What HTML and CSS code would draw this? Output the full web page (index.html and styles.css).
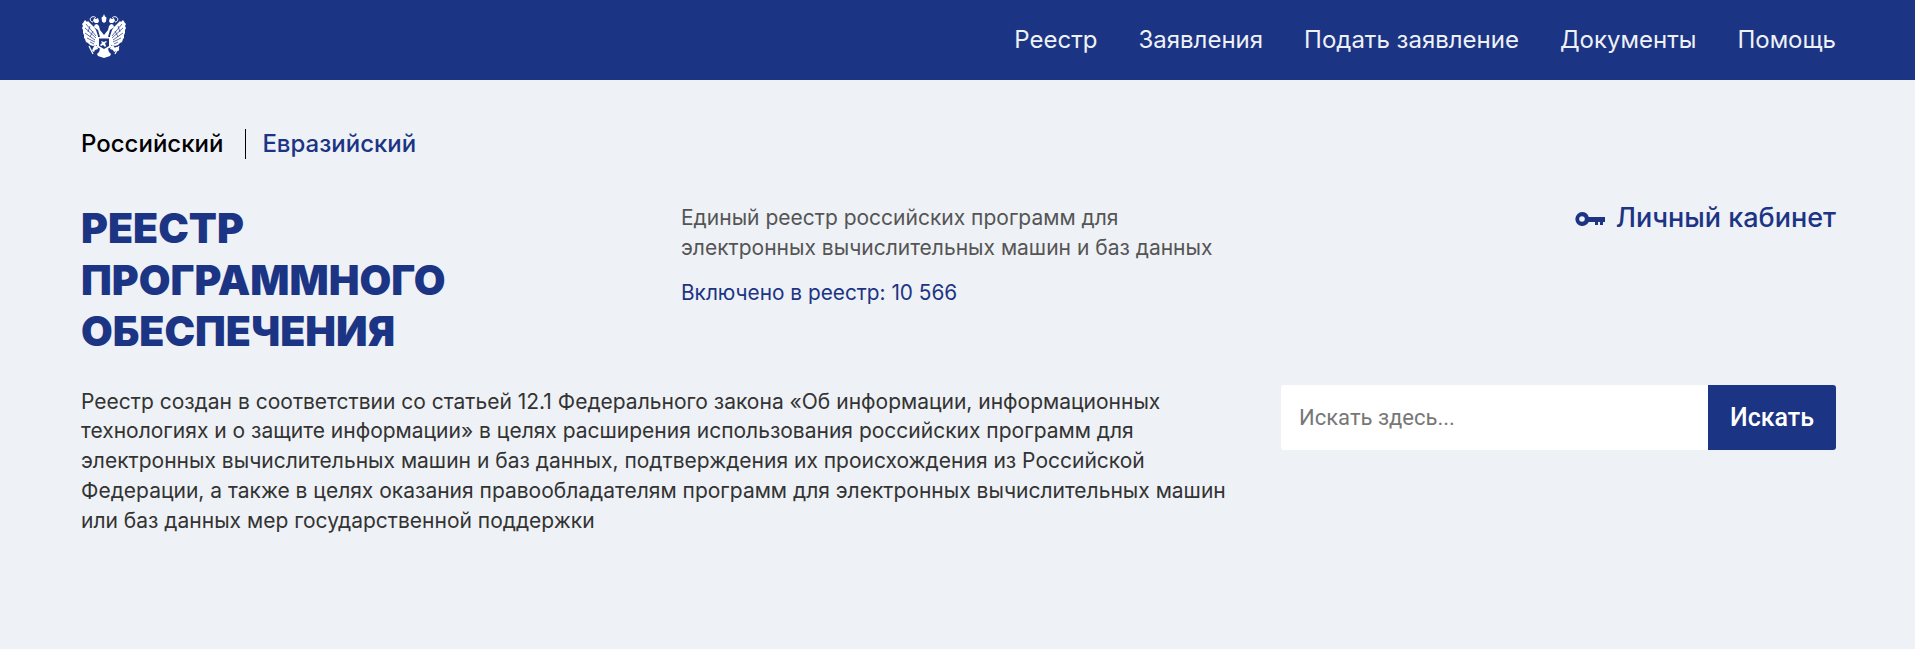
FILE: index.html
```html
<!DOCTYPE html>
<html lang="ru">
<head>
    <meta charset="UTF-8">
    <meta name="viewport" content="width=device-width, initial-scale=1.0">
    <title>Реестр программного обеспечения</title>
    <link rel="stylesheet" href="styles.css">
</head>
<body>
<header class="topbar">
    <a class="logo" href="#">
        <svg width="46" height="44" viewBox="0 0 44 44">
            <defs>
                <g id="half">
                    <!-- wing -->
                    <path fill="#fff" d="M3 6l2 2 1-1 5 5 3 4 2 6-1 9-4 1-3-1-2-2-2-1-1-3-1-1 0-3-1-2 0-3-1-2 1-2-1-2 1-1z"/>
                    <path fill="none" stroke="#1c3484" stroke-width=".7" d="M14 22L4 10M14 24L3 14M13 26L3 19M13 28L5 24M12 30L8 28M8 12l-2 6M11 17l-3 6"/>
                    <!-- neck and head -->
                    <path fill="#fff" d="M22 23h-4l-2-7-3-2-2-1 2-1-1-1 3-1 2 2 1 4 4 5z"/>
                    <!-- crown -->
                    <path fill="#fff" d="M12 4l2 1 2-1 1 3-1 2h-3l-2-2z"/>
                    <path fill="none" stroke="#fff" stroke-width="1" d="M11 8C8 8 7 4 10 3c2-1 3 0 4 1"/>
                    <!-- claw, sceptre -->
                    <path fill="#fff" d="M13 31l2 1 1 3-3 1-1 2-2-1 1-3z"/>
                    <path fill="none" stroke="#fff" stroke-width="1.300" d="M7 32l4 8"/>
                    <!-- tail -->
                    <path fill="#fff" d="M22 35v9l-3-1-3-1-1-2 2-2 1-3z"/>
                </g>
            </defs>
            <use href="#half"/>
            <use href="#half" transform="matrix(-1 0 0 1 44 0)"/>
            <circle cx="35" cy="35" r="2.200" fill="#fff"/>
            <path fill="#fff" d="M22 0l1 2.500 1.500 1-.5 4-2 1.500-2-1.500-.5-4 1.500-1zM15 23h14v10l-7 4-7-4z"/>
            <path fill="#1c3484" d="M17 24.500h10v7.500l-5 3-5-3z"/>
            <path fill="#fff" d="M19 27l3 1 2-1 1 1-2 1 1 3-1 1-2-2-2 1-1-1 2-2z"/>
        </svg>
    </a>
    <nav class="menu">
        <a href="#">Реестр</a>
        <a href="#">Заявления</a>
        <a href="#">Подать заявление</a>
        <a href="#">Документы</a>
        <a href="#">Помощь</a>
    </nav>
</header>
<main class="content">
    <div class="tabs">
        <a class="tab active" href="#">Российский</a>
        <a class="tab" href="#">Евразийский</a>
    </div>
    <div class="intro">
        <h1>РЕЕСТР<br>ПРОГРАММНОГО<br>ОБЕСПЕЧЕНИЯ</h1>
        <div class="about">
            <p class="about-text">Единый реестр российских программ для<br>электронных вычислительных машин и баз данных</p>
            <p class="about-count">Включено в реестр: 10 566</p>
        </div>
        <a class="cabinet" href="#">
            <svg width="31" height="16" viewBox="0 0 31 16" fill="#1c3484">
                <path fill-rule="evenodd" d="M8 1a7 7 0 0 1 6.700 5H31v5h-2v3h-3v-3h-2v3h-3v-3h-6.300A7 7 0 1 1 8 1zm0 4.200a2.800 2.800 0 1 0 0 5.600 2.800 2.800 0 0 0 0-5.600z"/>
            </svg>
            Личный кабинет
        </a>
    </div>
    <div class="lower">
        <p class="law">Реестр создан в соответствии со статьей 12.1 Федерального закона «Об информации, информационных технологиях и о защите информации» в целях расширения использования российских программ для электронных вычислительных машин и баз данных, подтверждения их происхождения из Российской Федерации, а также в целях оказания правообладателям программ для электронных вычислительных машин или баз данных мер государственной поддержки</p>
        <form class="search">
            <input type="text" placeholder="Искать здесь...">
            <button type="button">Искать</button>
        </form>
    </div>
</main>
</body>
</html>
```
FILE: styles.css
```css
* {
    box-sizing: border-box;
}

html, body {
    margin: 0;
    background: #eef1f6;
    font-family: Inter, Roboto, sans-serif;
}

a {
    text-decoration: none;
}

p {
    margin: 0;
}

.topbar {
    height: 80px;
    background: #1c3484;
    padding: 0 79px 0 81px;
    display: flex;
    justify-content: space-between;
    align-items: center;
}

.logo {
    display: flex;
    margin-bottom: 8px;
}

.menu {
    display: flex;
    gap: 41px;
}

.menu a {
    color: #eef1f6;
    font-size: 24px;
    line-height: 84px;
}

.content {
    padding: 49px 79px 0 81px;
}

.tabs {
    display: flex;
    height: 30px;
    align-items: center;
}

.tab {
    font-size: 24px;
    font-weight: 500;
    color: #1c3484;
    line-height: 30px;
}

.tab.active {
    color: #000;
    padding-right: 22px;
    margin-right: 16px;
    border-right: 1px solid #000;
}

.intro {
    display: grid;
    grid-template-columns: 600px 1fr auto;
    margin-top: 44px;
}

h1 {
    margin: 0;
    color: #1c3484;
    font-size: 41px;
    font-weight: 900;
    line-height: 51.500px;
}

.about {
    color: #555;
    font-size: 21px;
    line-height: 30px;
}

.about-count {
    margin-top: 15px;
    color: #1c3484;
    font-size: 20.800px;
}

.cabinet {
    display: flex;
    align-items: flex-start;
    gap: 11px;
    color: #1c3484;
    font-size: 27px;
    line-height: 30px;
    font-weight: 500;
}

.cabinet svg {
    margin-top: 8px;
}

.lower {
    display: flex;
    justify-content: space-between;
    margin-top: 27px;
}

.law {
    width: 1160px;
    color: #333;
    font-size: 21px;
    line-height: 29.800px;
    padding-top: 2px;
}

.search {
    width: 555px;
    height: 65px;
    display: flex;
}

.search input {
    flex: 1;
    min-width: 0;
    border: 0;
    padding: 0 18px;
    background: #fff;
    font: 22px Roboto, sans-serif;
    border-radius: 3px 0 0 3px;
}

.search input::placeholder {
    color: #777;
}

.search button {
    width: 128px;
    border: 0;
    background: #1c3484;
    color: #fff;
    font: 500 25px Roboto, sans-serif;
    border-radius: 0 3px 3px 0;
}
```
